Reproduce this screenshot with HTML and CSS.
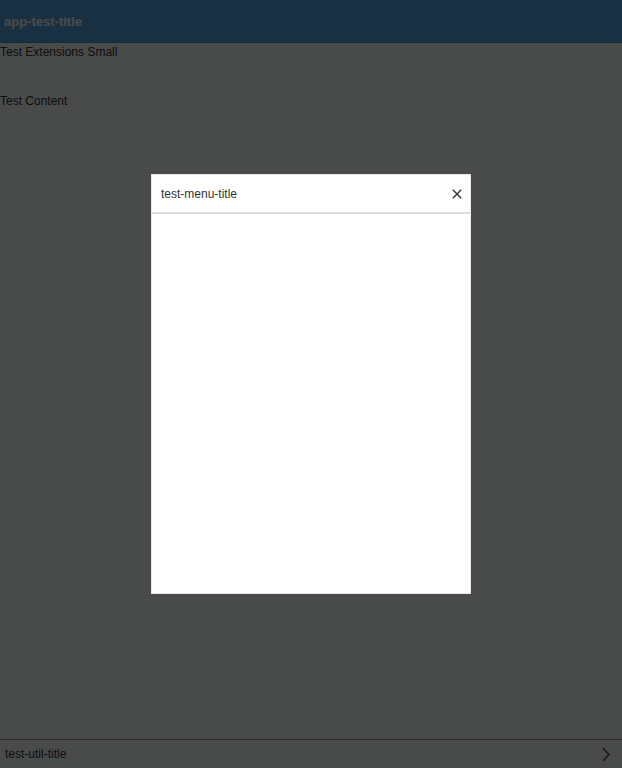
FILE: index.html
```html
<!DOCTYPE html>
<html>
<head>
<meta charset="utf-8">
<link rel="stylesheet" href="styles.css">
</head>
<body>
<div class="app">
  <header class="app-header"><span class="app-title">app-test-title</span></header>
  <main class="app-content">
    <div class="extensions">Test Extensions Small</div>
    <div class="content">Test Content</div>
  </main>
  <footer class="util-bar">
    <span class="util-title">test-util-title</span>
    <svg class="chevron" width="8" height="15" viewBox="0 0 8 15"><path d="M1 1 L7 7.5 L1 14" fill="none" stroke="#555" stroke-width="1.6"/></svg>
  </footer>
</div>
<div class="overlay">
  <div class="modal">
    <div class="modal-header">
      <span class="modal-title">test-menu-title</span>
      <svg class="close" width="10" height="10" viewBox="0 0 10 10"><path d="M0.8 0.8 L9.2 9.2 M9.2 0.8 L0.8 9.2" stroke="#333" stroke-width="1.4"/></svg>
    </div>
    <div class="modal-body"></div>
  </div>
</div>
</body>
</html>
```
FILE: styles.css
```css
html, body {
  margin: 0;
  padding: 0;
  height: 100%;
}
body {
  font-family: "Liberation Sans", Arial, sans-serif;
  font-size: 12px;
  color: #333;
  background: #fcfdff;
}
.app {
  display: flex;
  flex-direction: column;
  height: 100vh;
}
.app-header {
  height: 42px;
  flex: 0 0 42px;
  background: #57a7e2;
  border-bottom: 1px solid #4a8fc4;
  display: flex;
  align-items: center;
  padding-left: 4px;
}
.app-title {
  color: #fff;
  font-weight: bold;
  font-size: 13px;
}
.app-content {
  flex: 1;
  padding-top: 1px;
}
.extensions {
  height: 49px;
  line-height: 16px;
}
.content {
  line-height: 16px;
}
.util-bar {
  flex: 0 0 28px;
  height: 28px;
  border-top: 1px solid #9a9a9a;
  display: flex;
  align-items: center;
  justify-content: space-between;
  padding: 0 12px 0 5px;
}
.util-title {
  color: #333;
}
.chevron {
  display: block;
}
.overlay {
  position: fixed;
  inset: 0;
  background: rgba(0, 0, 0, 0.71);
  display: flex;
  align-items: center;
  justify-content: center;
}
.modal {
  width: 318px;
  height: 418px;
  background: #fff;
  border: 1px solid #e8e8e8;
  display: flex;
  flex-direction: column;
}
.modal-header {
  height: 37px;
  flex: 0 0 37px;
  border-bottom: 2px solid #dedede;
  display: flex;
  align-items: center;
  justify-content: space-between;
  padding: 0 8px 0 9px;
}
.modal-title {
  color: #333;
  font-size: 12px;
}
.close {
  display: block;
}
.modal-body {
  flex: 1;
}
```
